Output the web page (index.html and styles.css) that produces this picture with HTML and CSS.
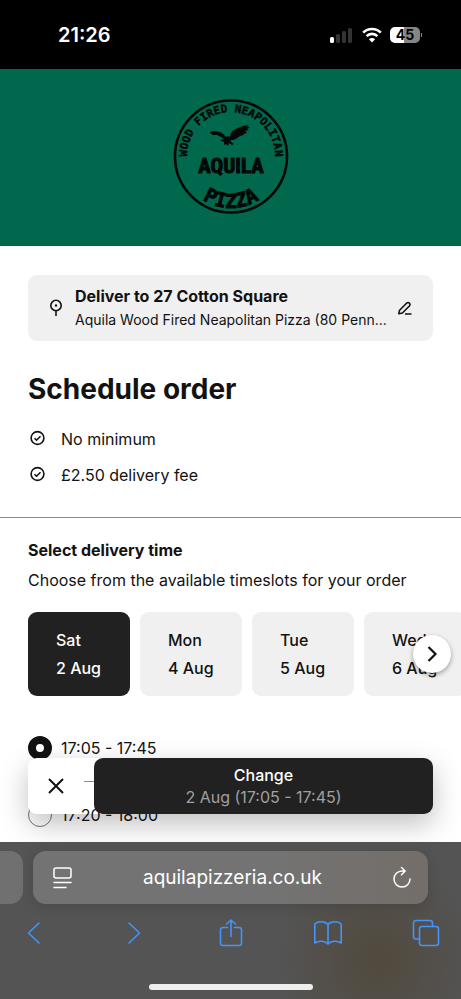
FILE: index.html
```html
<!DOCTYPE html>
<html lang="en">
<head>
    <meta charset="UTF-8">
    <meta name="viewport" content="width=device-width, initial-scale=1.0">
    <title>Aquila Pizza - Schedule order</title>
    <link rel="stylesheet" href="styles.css">
</head>
<body>
    <div class="status-bar">
        <span class="clock">21:26</span>
        <div class="status-icons">
            <svg width="24" height="16" viewBox="0 0 24 16" aria-hidden="true">
                <rect x="0" y="10" width="4" height="6" rx="1.5" fill="#fff"/>
                <rect x="6" y="7" width="4" height="9" rx="1.5" fill="#333"/>
                <rect x="12" y="4" width="4" height="12" rx="1.5" fill="#333"/>
                <rect x="18" y="1" width="4" height="15" rx="1.5" fill="#333"/>
            </svg>
            <svg width="20" height="16" viewBox="0 0 20 16" aria-hidden="true">
                <g fill="none" stroke="#fff" stroke-width="2.6">
                    <path d="M1.2 5.6a12.4 12.4 0 0 1 17.6 0"/>
                    <path d="M4.6 9.1a7.6 7.6 0 0 1 10.8 0"/>
                </g>
                <path d="M10 15.4 6.9 12.2a4.4 4.4 0 0 1 6.2 0z" fill="#fff"/>
            </svg>
            <div class="battery"><span class="battery-level">45</span></div>
        </div>
    </div>

    <div class="page">
        <header class="banner">
            <svg class="logo" width="118" height="118" viewBox="0 0 118 118" role="img" aria-label="Aquila Wood Fired Neapolitan Pizza">
                <defs>
                    <path id="arc-top" d="M15.900 68A44 44 0 1 1 102.100 68"/>
                    <path id="arc-bottom" d="M7 59A52 52 0 0 0 111 59"/>
                </defs>
                <circle cx="59" cy="59.5" r="56" fill="none" stroke="#020805" stroke-width="2.6"/>
                <text class="logo-ring"><textPath href="#arc-top" startOffset="50%" text-anchor="middle">WOOD FIRED NEAPOLITAN</textPath></text>
                <text class="logo-pizza"><textPath href="#arc-bottom" startOffset="50%" text-anchor="middle">PIZZA</textPath></text>
                <text class="logo-name" x="59" y="76" text-anchor="middle">AQUILA</text>
                <path d="M38 35c3-2 7 0 10 0 3 1 4 3 6 5 1-1 3-1 4 0 0-3 2-6 4-7 3-2 6-3 9-4l6-1-2 2 3 0-3 2 2 1-4 1 2 2-4 1 1 1-4 1c-3 2-5 4-8 4l-2 1 4 3-2 1-3-2-1 3-2-2-2 1 0-3-4-2 4-1-3-2-4-2-4 0-3-2z" fill="#020805"/>
            </svg>
        </header>

        <main class="content">
            <a class="address-card" href="#address">
                <svg width="16" height="20" viewBox="0 0 16 20" fill="none" stroke="#121212" stroke-width="1.6" aria-hidden="true">
                    <circle cx="8" cy="7.5" r="5.2"/>
                    <path d="M8 12.7V18"/>
                    <circle cx="8" cy="7.5" r="1.2" fill="#121212" stroke="none"/>
                </svg>
                <span class="address-text">
                    <strong>Deliver to 27 Cotton Square</strong>
                    <span class="address-line">Aquila Wood Fired Neapolitan Pizza (80 Penn...</span>
                </span>
                <svg width="16" height="16" viewBox="0 0 16 16" fill="none" stroke="#121212" stroke-width="1.6" stroke-linejoin="round" aria-hidden="true">
                    <path d="M1.8 13.8 2.6 10.200 9.800 3a2 2 0 0 1 2.800 2.800L5.400 13zM8 14h6.500"/>
                </svg>
            </a>

            <h1>Schedule order</h1>
            <ul class="facts">
                <li>
                    <svg width="18" height="18" viewBox="0 0 18 18" fill="none" stroke="#121212" stroke-width="1.6" aria-hidden="true"><circle cx="9.5" cy="8" r="6.4"/><path d="m6.5 8.2 2 2 4-4"/></svg>
                    No minimum
                </li>
                <li>
                    <svg width="18" height="18" viewBox="0 0 18 18" fill="none" stroke="#121212" stroke-width="1.6" aria-hidden="true"><circle cx="9.5" cy="8" r="6.4"/><path d="m6.5 8.2 2 2 4-4"/></svg>
                    £2.50 delivery fee
                </li>
            </ul>
        </main>

        <section class="schedule">
            <h2>Select delivery time</h2>
            <p>Choose from the available timeslots for your order</p>

            <div class="days-wrap">
                <div class="days">
                    <button class="day selected"><span>Sat</span><span>2 Aug</span></button>
                    <button class="day"><span>Mon</span><span>4 Aug</span></button>
                    <button class="day"><span>Tue</span><span>5 Aug</span></button>
                    <button class="day"><span>Wed</span><span>6 Aug</span></button>
                </div>
                <button class="next" aria-label="More days">
                    <svg width="20" height="20" viewBox="0 0 20 20" fill="none" stroke="#121212" stroke-width="2.2" aria-hidden="true"><path d="m6.5 3 7 7-7 7"/></svg>
                </button>
            </div>

            <div class="slots">
                <label class="slot"><input type="radio" name="slot" checked>17:05 - 17:45</label>
                <label class="slot"><input type="radio" name="slot">17:20 - 18:00</label>
            </div>
        </section>

        <div class="actions">
            <button class="close" aria-label="Close">
                <svg width="20" height="20" viewBox="0 0 20 20" fill="none" stroke="#121212" stroke-width="2" aria-hidden="true"><path d="m3 3 14 14M17 3 3 17"/></svg>
            </button>
            <button class="change"><span>Change</span><span class="change-slot">2 Aug (17:05 - 17:45)</span></button>
        </div>
    </div>

    <footer class="browser-bar">
        <div class="tabs">
            <div class="tab-previous"></div>
            <div class="url-bar">
                <button aria-label="Page menu">
                    <svg width="20" height="24" viewBox="0 0 20 24" fill="none" stroke="#fff" stroke-width="1.5" stroke-linecap="round" aria-hidden="true"><rect x="1" y="2" width="17" height="10" rx="2"/><path d="M1 16.5h17M1 21.5h12"/></svg>
                </button>
                <input type="text" value="aquilapizzeria.co.uk" aria-label="Address">
                <button aria-label="Reload">
                    <svg width="20" height="24" viewBox="0 0 20 24" fill="none" stroke="#fff" stroke-width="1.5" stroke-linecap="round" stroke-linejoin="round" aria-hidden="true"><path d="M18 13a8 8 0 1 1-8-8h3M9.5 1.5 13.2 5 9.5 8.7"/></svg>
                </button>
            </div>
        </div>
        <nav class="toolbar">
            <button aria-label="Back"><svg width="28" height="28" viewBox="0 0 28 28"><path d="M18 4 7.5 14 18 24"/></svg></button>
            <button aria-label="Forward"><svg width="28" height="28" viewBox="0 0 28 28"><path d="M10 4 20.5 14 10 24"/></svg></button>
            <button aria-label="Share"><svg width="28" height="28" viewBox="0 0 28 28"><path d="M10.5 8.5H6A2.5 2.5 0 0 0 3.5 11v13A2.5 2.5 0 0 0 6 26.5h16a2.5 2.5 0 0 0 2.5-2.5V11A2.5 2.5 0 0 0 22 8.5h-4.5M14 17.5V1M9.500 5 14 1l4.5 4"/></svg></button>
            <button aria-label="Bookmarks"><svg width="28" height="28" viewBox="0 0 28 28"><path d="M14 5.500C11 2 4 2 .8 5v19c4-2.500 10-2.500 13.200 1 3.200-3.500 9.200-3.500 13.200-1V5C24 2 17 2 14 5.500zV25"/></svg></button>
            <button aria-label="Tabs"><svg width="28" height="28" viewBox="0 0 28 28"><path d="M7.5 20H4a2.5 2.5 0 0 1-2.5-2.5V4A2.5 2.5 0 0 1 4 1.5h14A2.5 2.5 0 0 1 20.5 4v3.5"/><rect x="7.5" y="7.5" width="19" height="19" rx="2.5"/></svg></button>
        </nav>
        <div class="home-indicator"></div>
    </footer>
</body>
</html>
```

FILE: styles.css
```css
* {
    box-sizing: border-box;
}

body {
    margin: 0;
    height: 100vh;
    display: flex;
    flex-direction: column;
    overflow: hidden;
    background-color: #fff;
    color: #121212;
    font-family: Inter, "Liberation Sans", sans-serif;
    font-size: 16px;
    line-height: 24px;
}

button {
    border: none;
    padding: 0;
    background: none;
    color: inherit;
    font: inherit;
    cursor: pointer;
}

svg {
    display: block;
    flex: none;
}

/* Status bar */
.status-bar {
    flex: none;
    height: 69px;
    padding: 0 41px 0 58px;
    display: flex;
    align-items: center;
    justify-content: space-between;
    background-color: #000;
    color: #fff;
}

.clock {
    font-size: 20px;
    font-weight: 600;
}

.status-icons {
    display: flex;
    align-items: center;
    gap: 8px;
}

.battery {
    position: relative;
    width: 30px;
    height: 16px;
    border-radius: 5px;
    background: linear-gradient(to right, #fff 45%, #858585 45%);
    color: #000;
    font-size: 14px;
    font-weight: 700;
    line-height: 16px;
    text-align: center;
}

.battery::after {
    content: "";
    position: absolute;
    right: -2px;
    top: 6px;
    width: 1px;
    height: 4px;
    background-color: #858585;
}

/* Page */
.page {
    position: relative;
    flex: 1;
    min-height: 0;
    overflow: hidden;
}

.banner {
    display: flex;
    justify-content: center;
    padding: 28px 0 31px;
    background-color: #00684c;
}

.logo text {
    fill: #020805;
    font-weight: 700;
}

.logo-ring {
    font-family: "DejaVu Sans Mono", monospace;
    font-size: 11px;
    stroke: #020805;
    stroke-width: 0.4px;
}

.logo-pizza {
    font-family: "DejaVu Sans Mono", monospace;
    font-size: 20px;
    stroke: #020805;
    stroke-width: 0.8px;
}

.logo-name {
    font-family: "Roboto Condensed", "Liberation Sans", sans-serif;
    font-size: 21px;
    stroke: #020805;
    stroke-width: 1px;
}

.content {
    padding: 29px 28px 30px;
    border-bottom: 1px solid #8c8c8c;
}

.address-card {
    display: flex;
    align-items: center;
    gap: 11px;
    padding: 9px 20px;
    border-radius: 9px;
    background-color: #f0f0f0;
    color: inherit;
    text-decoration: none;
}

.address-text {
    flex: 1;
    min-width: 0;
    display: flex;
    flex-direction: column;
}

.address-line {
    font-size: 14px;
    white-space: nowrap;
}

h1 {
    margin: 30px 0 20px;
    font-size: 28px;
    line-height: 36px;
}

.facts {
    display: flex;
    flex-direction: column;
    gap: 12px;
    margin: 0;
    padding: 0;
    list-style: none;
}

.facts li {
    display: flex;
    align-items: center;
    gap: 15px;
}

.schedule {
    padding: 20px 0 0 28px;
}

h2 {
    margin: 0;
    font-size: 16px;
    line-height: 24px;
}

.schedule p {
    margin: 6px 0 20px;
}

.days-wrap {
    position: relative;
}

.days {
    display: flex;
    gap: 10px;
    overflow: hidden;
}

.day {
    flex: none;
    display: flex;
    flex-direction: column;
    width: 102px;
    padding: 14px 28px;
    border-radius: 9px;
    background-color: #f0f0f0;
    line-height: 28px;
    font-weight: 500;
    text-align: left;
    white-space: nowrap;
}

.day.selected {
    background-color: #212121;
    color: #fff;
}

.next {
    position: absolute;
    top: 23px;
    right: 10px;
    display: flex;
    align-items: center;
    justify-content: center;
    width: 38px;
    height: 38px;
    border-radius: 50%;
    background-color: #fff;
    box-shadow: 0 2px 5px rgba(0, 0, 0, 0.35);
}

.slots {
    padding: 18px 28px 0 0;
}

.slot {
    display: flex;
    align-items: center;
    gap: 9px;
    height: 67px;
}

.slot + .slot {
    border-top: 1px solid #8c8c8c;
}

.slot input {
    appearance: none;
    width: 24px;
    height: 24px;
    margin: 0;
    border: 1px solid #757575;
    border-radius: 50%;
    background-color: #fff;
}

.slot input:checked {
    border: 8px solid #121212;
}

/* Floating buttons */
.actions {
    position: absolute;
    left: 28px;
    right: 28px;
    bottom: 28px;
    display: flex;
    gap: 10px;
    border-radius: 9px;
    box-shadow: 0 10px 28px rgba(0, 0, 0, 0.25);
}

.close {
    display: flex;
    align-items: center;
    justify-content: center;
    width: 56px;
    height: 56px;
    border-radius: 9px;
    background-color: #fff;
}

.change {
    flex: 1;
    display: flex;
    flex-direction: column;
    justify-content: center;
    align-items: center;
    border-radius: 9px;
    background-color: #212121;
    color: #fff;
    font-weight: 500;
    line-height: 22px;
}

.change-slot {
    color: #a0a0a0;
    font-weight: 400;
}

/* Browser controls */
.browser-bar {
    flex: none;
    display: flex;
    flex-direction: column;
    height: 157px;
    padding: 9px 0;
    background: radial-gradient(circle at 82% 75%, #51493d, rgba(84, 84, 84, 0) 100px), #545454;
}

.tabs {
    display: flex;
    gap: 10px;
    padding-right: 33px;
}

.tab-previous {
    width: 23px;
    border-radius: 0 13px 13px 0;
    background-color: #707070;
}

.url-bar {
    flex: 1;
    display: flex;
    align-items: center;
    height: 53px;
    padding: 0 16px 0 20px;
    border-radius: 13px;
    background: linear-gradient(to right, #737373 60%, #736e69);
    box-shadow: 0 2px 14px rgba(0, 0, 0, 0.15);
}

.url-bar input {
    flex: 1;
    min-width: 0;
    border: none;
    padding: 0;
    background: none;
    color: #fff;
    font: inherit;
    font-size: 19px;
    text-align: center;
}

.toolbar {
    display: flex;
    justify-content: space-between;
    padding: 15px 21px 0;
}

.toolbar svg {
    fill: none;
    stroke: #4593fa;
    stroke-width: 1.6px;
    stroke-linecap: round;
    stroke-linejoin: round;
}

.home-indicator {
    width: 164px;
    height: 6px;
    margin: auto auto 0;
    border-radius: 3px;
    background-color: #eee;
}
```
